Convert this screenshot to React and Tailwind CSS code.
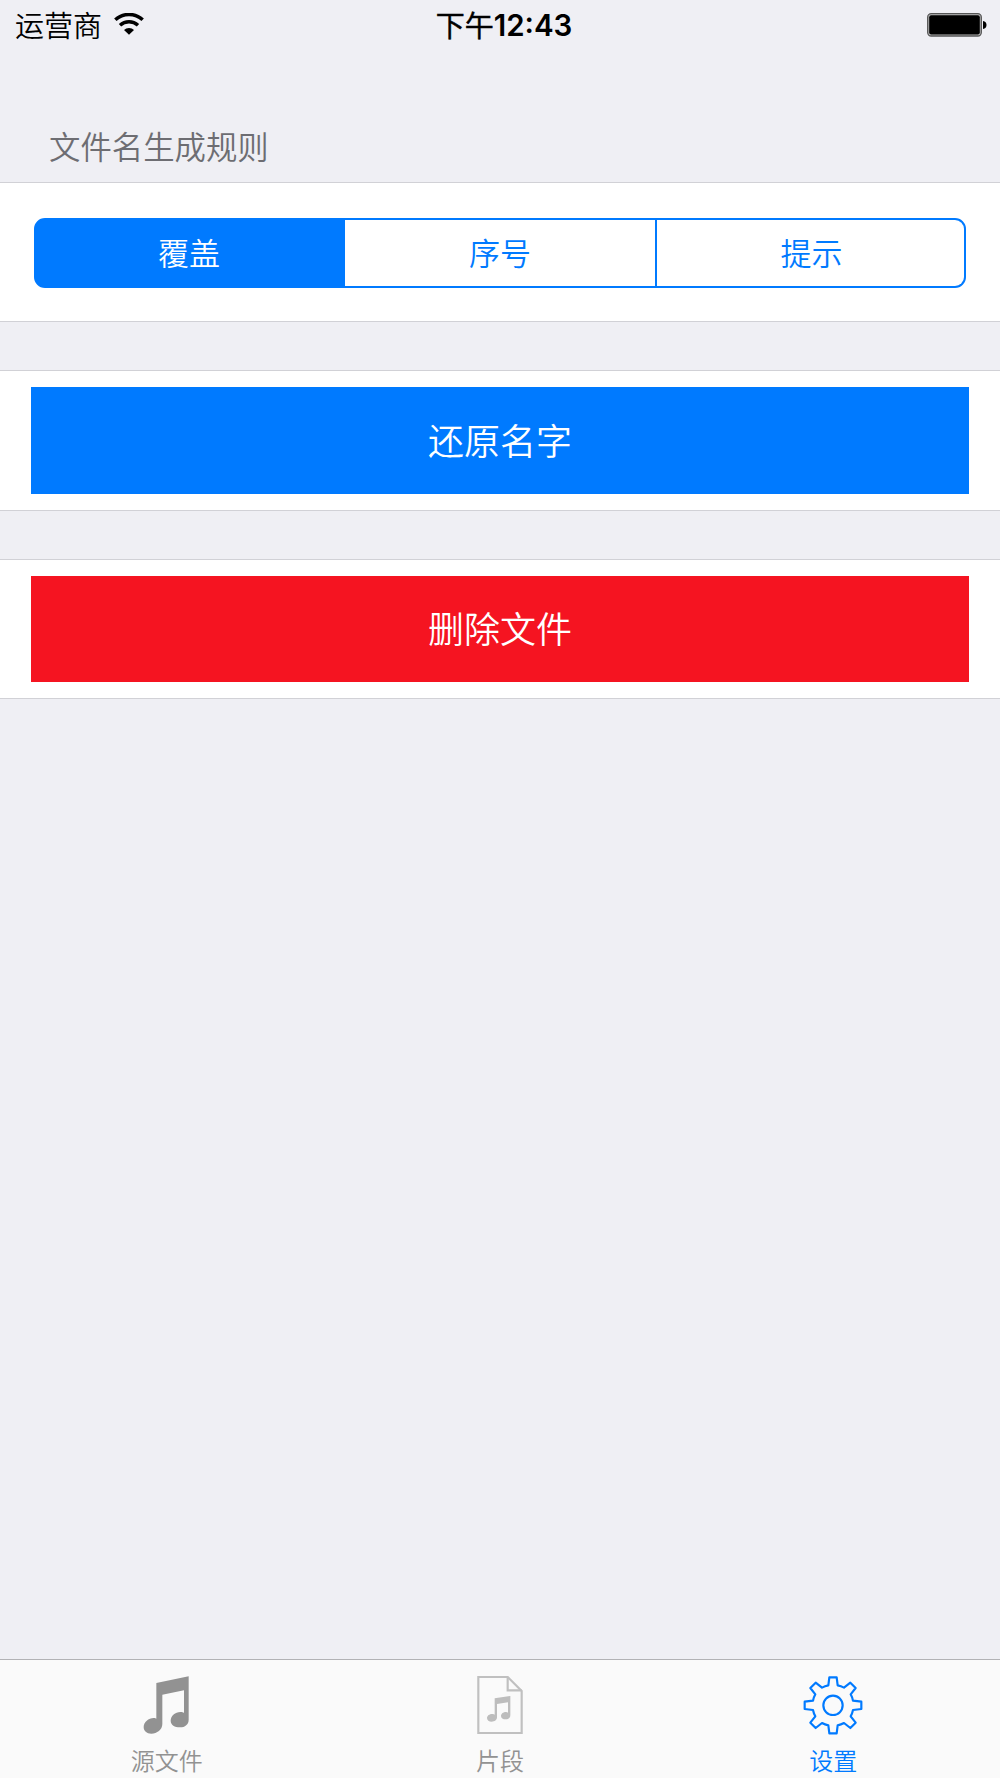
import { useState } from 'react'
import clsx from 'clsx'

const NAMING_RULES = ['覆盖', '序号', '提示']

// ─── Status bar icons ─────────────────────────────────────────────────────────

function WifiIcon() {
  return (
    <svg width="30" height="22" viewBox="0 0 90 66" fill="none" stroke="#000" strokeWidth="10.500">
      <path d="M4 20.500A60 60 0 0 1 86 20.500" />
      <path d="M18 36.500A40 40 0 0 1 72 36.500" />
      <path d="M30 51A21 21 0 0 1 60 51L45 65Z" fill="#000" stroke="none" />
    </svg>
  )
}

function BatteryIcon() {
  return (
    <svg width="60" height="24" viewBox="0 0 60 24">
      <rect x="0.700" y="0.700" width="53.600" height="22.300" rx="3.500" fill="#bbb" stroke="#555" strokeWidth="1.300" />
      <rect x="2.200" y="2.200" width="50.600" height="19.300" rx="2" fill="#000" />
      <path d="M56 8C58.300 8.300 59.500 10 59.500 12S58.300 15.700 56 16Z" fill="#000" />
    </svg>
  )
}

// ─── Tab icons ────────────────────────────────────────────────────────────────

function NotesIcon() {
  return (
    <svg width="60" height="60" viewBox="0 0 180 180" fill="#929292">
      <path d="M58 21L155 1V131C155 145 144 154 129 154C113 154 101 147 101 134C101 120 115 108 130 108C135 108 139 109 141 111V43L76 56V144C76 161 60 173 43 173C29 173 20 165 20 153C20 138 35 126 50 126C54 126 57 127 58 128Z" />
    </svg>
  )
}

function ClipIcon() {
  return (
    <svg width="60" height="60" viewBox="0 0 180 180" fill="none" stroke="#c0c0c0" strokeWidth="6.500">
      <path d="M25 3H113L155 45V171H25Z" />
      <path d="M113 3V43H155" />
      <path
        fill="#bdbdbd"
        stroke="none"
        d="M74 67L121 60V117C121 126 115 130 107 130C99 130 93 127 93 120C93 113 100 108 108 108C111 108 113 109 114 110V79L81 84V124C81 132 74 137 65 137C57 137 51 133 51 126C51 119 59 114 66 114C70 114 73 115 74 116Z"
      />
    </svg>
  )
}

function GearIcon() {
  return (
    <svg width="60" height="60" viewBox="0 0 180 180" fill="none" stroke="#007aff" strokeWidth="6.500" strokeLinejoin="round">
      <circle cx="90" cy="88" r="29" />
      <path d="M79 4H101L104 28Q114 30 123 35L142 20L158 36L143 55Q148 64 150 74L175 77V99L150 102Q148 112 143 121L158 140L142 156L123 141Q114 146 104 148L101 172H79L76 148Q66 146 57 141L38 156L22 140L37 121Q32 112 30 102L5 99V77L30 74Q32 64 37 55L22 36L38 20L57 35Q66 30 76 28Z" />
    </svg>
  )
}

const TABS = [
  { id: 'source', label: '源文件', Icon: NotesIcon },
  { id: 'clips', label: '片段', Icon: ClipIcon },
  { id: 'settings', label: '设置', Icon: GearIcon },
]

// ─── Sections ─────────────────────────────────────────────────────────────────

function StatusBar() {
  return (
    <header className="grid h-[50px] grid-cols-3 items-center pl-[15px] pr-[13px] text-black">
      <div className="flex items-center">
        <span className="mb-[2px] text-[29px] leading-[48px]">运营商</span>
        <span className="mb-[2px] ml-[12px]"><WifiIcon /></span>
      </div>
      <div className="flex items-center justify-center whitespace-nowrap pl-[6px]">
        <span className="mb-[1px] text-[29px] leading-[47px] [-webkit-text-stroke:0.6px_#000]">下午</span>
        <span className="pt-[1px] font-['Inter'] text-[29.500px] font-semibold leading-[49px]">12:43</span>
      </div>
      <div className="flex justify-end"><BatteryIcon /></div>
    </header>
  )
}

function Segmented({ value, onChange }) {
  return (
    <div className="grid h-[70px] grid-cols-[309px_310px_309px] overflow-hidden rounded-[11px] border-2 border-[#007aff] bg-[#007aff]">
      {NAMING_RULES.map((rule, i) => (
        <button
          key={rule}
          type="button"
          onClick={() => onChange(rule)}
          className={clsx(
            'border-[#007aff] pb-[1px] text-[31px]',
            i === 0 && 'pr-[3px]',
            i > 0 && NAMING_RULES[i - 1] !== value && 'border-l-2 pl-[2px]',
            value === rule ? 'bg-[#007aff] text-white' : 'bg-white text-[#007aff]',
          )}
        >
          {rule}
        </button>
      ))}
    </div>
  )
}

function ActionRow({ label, className }) {
  return (
    <section className="border-y border-[#d1d1d6] bg-white px-[31px] py-4">
      <button type="button" className={clsx('w-full pb-[4px] text-[36px] text-white', className)}>
        {label}
      </button>
    </section>
  )
}

export default function App() {
  const [rule, setRule] = useState('覆盖')
  const [tab, setTab] = useState('settings')

  return (
    <div className="flex h-[1778px] w-[1000px] flex-col bg-[#efeff4] font-['Noto_Sans_CJK_SC',sans-serif] font-[350]">
      <StatusBar />

      <main className="flex-1">
        <h2 className="h-[132px] pl-[49px] pt-[73px] text-[31.400px] leading-[46px] text-[#6d6d72]">文件名生成规则</h2>
        <section className="mb-12 h-[140px] border-y border-[#d1d1d6] bg-white px-[34px] pt-[35px]">
          <Segmented value={rule} onChange={setRule} />
        </section>
        <div className="flex flex-col gap-12">
          <ActionRow label="还原名字" className="h-[107px] bg-[#007aff]" />
          <ActionRow label="删除文件" className="h-[106px] bg-[#f51421]" />
        </div>
      </main>

      <nav className="grid h-[119px] grid-cols-3 border-t border-[#b2b2b5] bg-[#fafafa]">
        {TABS.map(({ id, label, Icon }) => (
          <button
            key={id}
            type="button"
            onClick={() => setTab(id)}
            className={clsx('flex flex-col items-center pt-4', tab === id ? 'text-[#007aff]' : 'text-[#929292]')}
          >
            <Icon />
            <span className="mt-[6px] text-[24px] leading-[36px]">{label}</span>
          </button>
        ))}
      </nav>
    </div>
  )
}
